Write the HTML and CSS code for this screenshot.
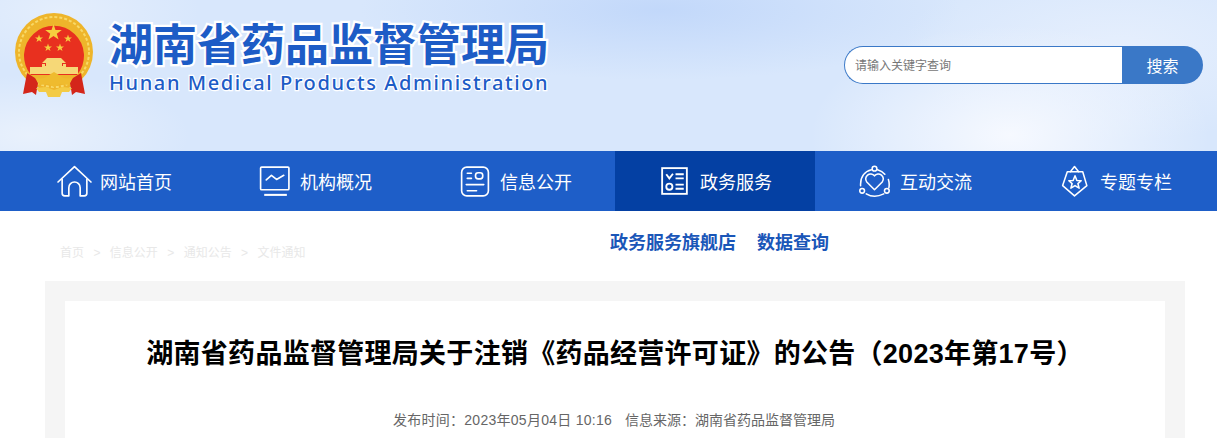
FILE: index.html
```html
<!DOCTYPE html>
<html lang="zh-CN">
<head>
    <meta charset="UTF-8">
    <title>湖南省药品监督管理局关于注销《药品经营许可证》的公告（2023年第17号）</title>
    <link rel="stylesheet" href="styles.css">
</head>
<body>
    <header class="header">
        <svg class="emblem" width="80" height="88" viewBox="14 12 80 88">
            <circle cx="54" cy="52" r="39" fill="#eeb52b"/>
            <circle cx="54" cy="52" r="35" fill="none" stroke="#f8d968" stroke-width="2" stroke-dasharray="3 2"/>
            <path d="M31 75 A30 30 0 1 1 77 75 Z" fill="#e8301f"/>
            <polygon points="53.500,24 55.500,29.900 61.800,30 56.800,33.700 58.600,39.600 53.500,36.100 48.400,39.600 50.200,33.700 45.200,30 51.500,29.900" fill="#f6cf3f"/>
            <polygon points="39,34.500 40,37.400 43,37.400 40.600,39.200 41.500,42 39,40.300 36.500,42 37.400,39.200 35,37.400 38,37.400" fill="#f6cf3f"/>
            <polygon points="68,34.500 69,37.400 72,37.400 69.600,39.200 70.500,42 68,40.300 65.500,42 66.400,39.200 64,37.400 67,37.400" fill="#f6cf3f"/>
            <polygon points="48,43.500 49,46.400 52,46.400 49.600,48.200 50.500,51 48,49.300 45.500,51 46.400,48.200 44,46.400 47,46.400" fill="#f6cf3f"/>
            <polygon points="60,43.500 61,46.400 64,46.400 61.600,48.200 62.500,51 60,49.300 57.500,51 58.400,48.200 56,46.400 59,46.400" fill="#f6cf3f"/>
            <path d="M47 58 H61 L66 63 H62 V66 H63 V64 H66 V67 H78 V74 H30 V67 H42 V64 H45 V66 H46 V63 H42 Z" fill="#f6d877"/>
            <path d="M27 73 L35 78 L38 83 L36 95 L32 92 L23 94 Z M81 73 L73 78 L70 83 L72 95 L76 92 L85 94 Z" fill="#d4261a"/>
            <path d="M36 78 C42 79 46 78 49 75 L54 72 L59 75 C62 78 66 79 72 78 L69 85 L60 84 L54 87 L48 84 L39 85 Z" fill="#efbb2e"/>
            <path d="M36 88 L46 87 L54 90 L62 87 L72 88 L69 92 L62 92 L60 97 H48 L46 92 L39 92 Z" fill="#f3cb45"/>
        </svg>
        <div class="brand">
            <h1 class="brand-cn">湖南省药品监督管理局</h1>
            <p class="brand-en">Hunan Medical Products Administration</p>
        </div>
        <form class="search">
            <input class="search-input" type="text" placeholder="请输入关键字查询">
            <button class="search-btn" type="button">搜索</button>
        </form>
    </header>

    <nav class="nav">
        <a class="nav-item" href="#">
            <svg class="nav-icon" viewBox="0 0 34 32" fill="none" stroke="#fff" stroke-width="1.600" stroke-linejoin="round" stroke-linecap="round">
                <path d="M1 16.500 L17 1.500 L33 16.500"/>
                <path d="M5 14 V27.500 Q5 30 7.500 30 H11.500 V22 A5.500 5.500 0 0 1 22.500 22 V30 H26.500 Q29 30 29 27.500 V14"/>
            </svg>
            网站首页
        </a>
        <a class="nav-item" href="#">
            <svg class="nav-icon" viewBox="0 0 34 32" fill="none" stroke="#fff" stroke-width="1.600" stroke-linejoin="round" stroke-linecap="round">
                <rect x="3.500" y="2" width="27.500" height="22" rx="1"/>
                <path d="M9 14.500 L14 10 L19 14 L26 10"/>
                <path d="M7 29 H29" stroke-width="2" stroke-linecap="butt"/>
            </svg>
            机构概况
        </a>
        <a class="nav-item" href="#">
            <svg class="nav-icon" viewBox="0 0 34 32" fill="none" stroke="#fff" stroke-width="1.600" stroke-linejoin="round" stroke-linecap="round">
                <rect x="4.500" y="2" width="26" height="28" rx="5"/>
                <path d="M10 8 H14 M10 13 H14 M9 19 H26 M10 25 H19"/>
                <rect x="18" y="7.500" width="7" height="6" rx="2.500"/>
            </svg>
            信息公开
        </a>
        <a class="nav-item nav-item-active" href="#">
            <svg class="nav-icon" viewBox="0 0 34 32" fill="none" stroke="#fff" stroke-width="1.800">
                <rect x="5" y="3" width="24" height="25"/>
                <path d="M9 9 L12 13 L15.500 8.500 M18 9 H26 M18 13 H26 M18 19 H26 M18 23 H26"/>
                <circle cx="12" cy="21" r="3"/>
            </svg>
            政务服务
        </a>
        <a class="nav-item" href="#">
            <svg class="nav-icon" viewBox="0 0 34 32" fill="none" stroke="#fff" stroke-width="1.500" stroke-linejoin="round" stroke-linecap="round">
                <path d="M17 24 L9.500 16.500 A4.800 4.800 0 0 1 17 10.500 A4.800 4.800 0 0 1 24.500 16.500 Z"/>
                <circle cx="17" cy="3.500" r="2.300"/>
                <circle cx="5" cy="25" r="2.300"/>
                <circle cx="29" cy="25" r="2.300"/>
                <path d="M14 4.500 C8 6 3 11 3.500 20 M20 4.500 C23 5.500 25 6.500 27 9 M30.500 14 C31.500 17 31.500 19 31 22 M9 28 C14 31 20 31 26 28"/>
            </svg>
            互动交流
        </a>
        <a class="nav-item" href="#">
            <svg class="nav-icon" viewBox="0 0 34 32" fill="none" stroke="#fff" stroke-width="1.500" stroke-linejoin="round" stroke-linecap="round">
                <path d="M10 6.500 L5.500 20 L17 30 L29 20 L25 6.500 Z"/>
                <path d="M13 6.500 L17 1.500 L21 6.500"/>
                <polygon points="17.500,10.500 19.300,15 23.500,15.300 20.300,18 21.500,22.500 17.500,20 13.500,22.500 14.700,18 11.500,15.300 15.700,15"/>
            </svg>
            专题专栏
        </a>
    </nav>

    <div class="topbar">
        <div class="crumbs">
            <a href="#">首页</a><span>&gt;</span><a href="#">信息公开</a><span>&gt;</span><a href="#">通知公告</a><span>&gt;</span><a href="#">文件通知</a>
        </div>
        <div class="quick-links">
            <a href="#">政务服务旗舰店</a>
            <a href="#">数据查询</a>
        </div>
    </div>

    <main class="panel">
        <article class="article">
            <h2 class="article-title">湖南省药品监督管理局关于注销《药品经营许可证》的公告（2023年第17号）</h2>
            <p class="article-meta"><span class="article-time">发布时间：2023年05月04日 10:16</span><span>信息来源：湖南省药品监督管理局</span></p>
        </article>
    </main>
</body>
</html>
```

FILE: styles.css
```css
html, body { height: 438px; overflow: hidden; }
body { margin: 0; background-color: white; font-family: "Liberation Sans", "Noto Sans CJK SC", sans-serif; }
a { text-decoration: none; color: inherit; }

.header {
    height: 151px;
    box-sizing: border-box;
    padding: 12px 14px 0 14px;
    display: flex;
    align-items: flex-start;
    background-color: #d8e7fc;
    background-image:
        radial-gradient(ellipse 300px 70px at 660px 10px, #c2d8fa 0%, rgba(194,216,250,0) 100%),
        radial-gradient(ellipse 200px 110px at 1010px 135px, #f6f9ff 0%, rgba(246,249,255,0) 100%),
        radial-gradient(ellipse 220px 90px at 1120px 50px, #e6effd 0%, rgba(230,239,253,0) 100%),
        radial-gradient(ellipse 160px 60px at 30px 135px, #e9f1fc 0%, rgba(233,241,252,0) 100%),
        radial-gradient(ellipse 140px 60px at 60px 10px, #e4eefc 0%, rgba(228,238,252,0) 100%);
}
.emblem { flex: none; margin-right: 15px; }
.brand { width: 440px; margin-top: 2px; color: #1d5cc6; }
.brand-cn {
    margin: 3px 0 0 0;
    font-size: 44px;
    line-height: 50px;
    font-weight: bold;
    white-space: nowrap;
    -webkit-text-stroke: 4.500px white;
    paint-order: stroke fill;
    font-family: "Noto Sans CJK SC", sans-serif;
}
.brand-en {
    margin: 3px 0 0 0;
    font-size: 20px;
    line-height: 26px;
    letter-spacing: 1.600px;
    white-space: nowrap;
    font-family: "Noto Sans", sans-serif;
    font-weight: 500;
    -webkit-text-stroke: 2.500px white;
    paint-order: stroke fill;
}
.search { display: flex; margin: 34px 0 0 auto; width: 359px; height: 38px; }
.search-input {
    flex: 1;
    min-width: 0;
    box-sizing: border-box;
    border: 1px solid #3a78c7;
    border-right: none;
    border-radius: 19px 0 0 19px;
    padding: 2px 10px 0 10px;
    font-size: 12px;
    font-family: inherit;
    background-color: white;
    outline: none;
}
.search-input::placeholder { color: #777; opacity: 1; }
.search-btn {
    width: 81px;
    border: none;
    border-radius: 0 19px 19px 0;
    background-color: #3a78c7;
    color: white;
    font-size: 16px;
    font-family: inherit;
    padding: 0;
}

.nav { height: 60px; padding-left: 15px; display: flex; background-color: #1e5ec8; }
.nav-item {
    width: 200px;
    box-sizing: border-box;
    padding-left: 42px;
    display: flex;
    align-items: center;
    gap: 8px;
    color: white;
    font-size: 18px;
}
.nav-item-active { background-color: #0440a3; }
.nav-icon { width: 35px; height: 33px; flex: none; }

.topbar { height: 70px; position: relative; display: flex; justify-content: center; }
.crumbs {
    position: absolute;
    left: 60px;
    top: 34px;
    font-size: 12px;
    line-height: 16px;
    color: #e8e8e8;
}
.crumbs span { margin: 0 9.400px; }
.quick-links {
    display: flex;
    gap: 21px;
    margin: 21px 0 0 222px;
    font-size: 18px;
    line-height: 22px;
    font-weight: bold;
    color: #1a56b8;
}

.panel { margin: 0 32px 0 45px; padding: 20px 20px 0 20px; background-color: #f5f5f5; }
.article { background-color: white; height: 300px; padding-top: 33px; box-sizing: border-box; text-align: center; }
.article-title { margin: 0; font-size: 27px; line-height: 40px; font-weight: bold; letter-spacing: 0.280px; color: black; }
.article-meta { margin: 34px 0 0 0; padding-right: 2px; font-size: 14px; line-height: 24px; color: #666; }
.article-time { letter-spacing: 0.270px; }
.article-meta span + span { margin-left: 13px; }
```
